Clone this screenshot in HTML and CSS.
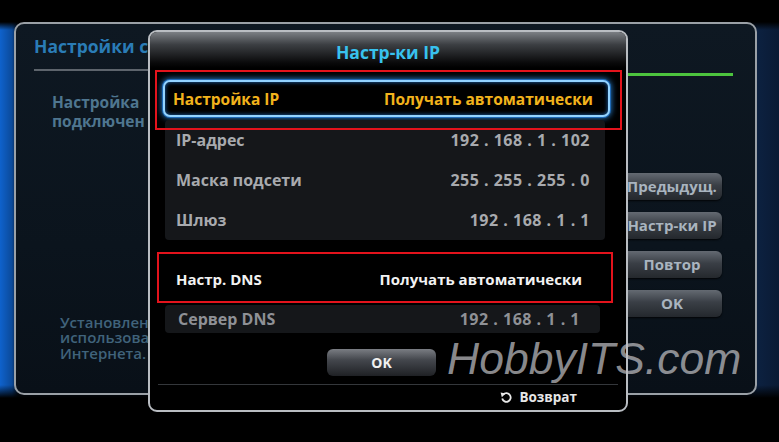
FILE: index.html
```html
<!DOCTYPE html>
<html lang="ru">
<head>
    <meta charset="UTF-8">
    <title>Настр-ки IP</title>
    <link rel="stylesheet" href="styles.css">
</head>
<body>
    <div class="screen">
        <!-- network settings panel behind the popup (only the visible part of its texts) -->
        <div class="back-panel">
            <div class="back-title">Настройки с</div>
            <div class="back-rule">
                <span class="rule-gray"></span>
                <span class="rule-green"></span>
            </div>
            <div class="back-body">
                <div class="back-info">
                    <p class="info-top">Настройка<br>подключен</p>
                    <p class="info-bottom">Установлен<br>использова<br>Интернета.</p>
                </div>
                <div class="side-buttons">
                    <div class="side-btn">Предыдущ.</div>
                    <div class="side-btn">Настр-ки IP</div>
                    <div class="side-btn">Повтор</div>
                    <div class="side-btn">OK</div>
                </div>
            </div>
        </div>

        <!-- IP settings popup -->
        <div class="dialog">
            <div class="dialog-head">Настр-ки IP</div>

            <div class="focus-row">
                <span>Настройка IP</span>
                <span>Получать автоматически</span>
            </div>

            <div class="list-panel">
                <div class="row"><span>IP-адрес</span><span class="ip">192 . 168 . 1 . 102</span></div>
                <div class="row"><span>Маска подсети</span><span class="ip">255 . 255 . 255 . 0</span></div>
                <div class="row"><span>Шлюз</span><span class="ip">192 . 168 . 1 . 1</span></div>
            </div>

            <div class="dns-row">
                <span>Настр. DNS</span>
                <span>Получать автоматически</span>
            </div>

            <div class="server-row">
                <span>Сервер DNS</span>
                <span class="ip">192 . 168 . 1 . 1</span>
            </div>

            <div class="ok-btn">OK</div>

            <div class="dialog-foot">
                <svg class="back-icon" width="12" height="12" viewBox="0 0 12 12">
                    <path d="M3.2 3.6 A4.3 4.3 0 1 1 2.2 7.6" fill="none" stroke="#e8e8e8" stroke-width="1.8"/>
                    <polygon points="0.6,1.4 5.6,2.6 1.8,6.2" fill="#e8e8e8"/>
                </svg>
                <span>Возврат</span>
            </div>

            <!-- red annotation frames -->
            <div class="mark mark-ip"></div>
            <div class="mark mark-dns"></div>
        </div>

        <div class="watermark">HobbyITS.com</div>
    </div>
</body>
</html>
```

FILE: styles.css
```css
body {
    margin: 0;
    background-color: #000;
    font-family: "Open Sans", "DejaVu Sans", sans-serif;
}

.screen {
    position: relative;
    width: 779px;
    height: 442px;
    overflow: hidden;
    padding-top: 22px;
    box-sizing: border-box;
    background:
        linear-gradient(180deg, #000 0, #000 22px, rgba(0, 0, 0, 0) 30px, rgba(0, 0, 0, 0) 385px, #000 398px),
        linear-gradient(90deg, #0f62cc 0, #0b4a9a 12px, #06162a 18px, #06142a 740px, #0c2140 758px, #0a1a34 779px);
}

/* ---------- back panel ---------- */

.back-panel {
    margin-left: 14px;
    width: 743px;
    height: 373px;
    box-sizing: border-box;
    border: 2px solid #9aa0a6;
    border-radius: 10px;
    background: linear-gradient(180deg, #0e1822 0%, #0b141d 60%, #091018 100%);
    padding: 12px 22px 32px 18px;
    display: flex;
    flex-direction: column;
}

.back-title {
    height: 20px;
    line-height: 20px;
    white-space: nowrap;
    font-size: 17.5px;
    font-weight: 700;
    color: #2a7cb6;
}

.back-rule {
    display: flex;
    justify-content: space-between;
    margin-top: 13px;
    height: 7px;
}

.rule-gray {
    width: 200px;
    height: 2px;
    background-color: #5d646c;
}

.rule-green {
    width: 105px;
    height: 3px;
    margin-top: 4px;
    background-color: #4cc43e;
}

.back-body {
    flex: 1;
    display: flex;
    justify-content: space-between;
}

.back-info {
    display: flex;
    flex-direction: column;
    justify-content: space-between;
    padding-left: 18px;
}

.info-top {
    white-space: nowrap;
    margin: 17px 0 0;
    font-size: 15.5px;
    font-weight: 700;
    line-height: 19px;
    color: #4f7690;
}

.info-bottom {
    white-space: nowrap;
    margin: 0 0 0 8px;
    font-size: 15px;
    font-weight: 600;
    line-height: 15.5px;
    color: #40637b;
}

.side-buttons {
    display: flex;
    flex-direction: column;
    gap: 12px;
    padding-top: 97px;
    margin-right: 11px;
}

.side-btn {
    width: 100px;
    height: 27px;
    line-height: 27px;
    border-radius: 6px;
    text-align: center;
    white-space: nowrap;
    font-size: 15px;
    font-weight: 700;
    color: #a9b4bf;
    background: linear-gradient(180deg, #646a72 0%, #3a3f46 45%, #24282d 100%);
    box-shadow: 0 1px 2px rgba(0, 0, 0, 0.8);
}

/* ---------- IP popup ---------- */

.dialog {
    position: absolute;
    left: 148px;
    top: 30px;
    width: 480px;
    height: 382px;
    box-sizing: border-box;
    border: 2px solid #b9bdc2;
    border-radius: 9px;
    background-color: #000;
    overflow: hidden;
}

.dialog-head {
    height: 36px;
    line-height: 40px;
    text-align: center;
    font-size: 17.5px;
    font-weight: 700;
    color: #38c2ee;
    background: linear-gradient(180deg, #7b7f84 0%, #3c3f43 35%, #0a0a0b 85%, #000 100%);
}

.focus-row {
    display: flex;
    justify-content: space-between;
    align-items: center;
    margin: 12px 16px 0 13px;
    height: 37px;
    box-sizing: border-box;
    padding: 0 15px 0 8px;
    border: 2px solid #93d3ff;
    border-radius: 7px;
    box-shadow: 0 0 0 1px #1f6ab8, 0 0 6px 1px #2b86d8, inset 0 0 4px #1f6ab8;
    background-color: #000;
    font-size: 15.5px;
    font-weight: 700;
    color: #f2b31c;
}

.list-panel {
    margin: 3px 21px 0 15px;
    border-radius: 4px;
    background-color: #15171a;
}

.row,
.dns-row,
.server-row {
    display: flex;
    justify-content: space-between;
    align-items: center;
    font-size: 16px;
    font-weight: 700;
}

.ip {
    letter-spacing: 0.5px;
}

.row {
    height: 40px;
    padding: 0 15px 0 11px;
    color: #a8aaae;
}

.dns-row {
    height: 36px;
    margin: 21px 21px 0 15px;
    padding: 0 23px 0 11px;
    font-size: 15px;
    color: #f2f2f2;
}

.server-row {
    height: 28px;
    margin: 8px 26px 0 15px;
    padding: 0 20px 0 13px;
    border-radius: 4px;
    background-color: #15171a;
    color: #8f9196;
}

.ok-btn {
    width: 109px;
    height: 27px;
    line-height: 27px;
    margin: 16px 0 0 177px;
    border-radius: 6px;
    text-align: center;
    font-size: 14px;
    font-weight: 700;
    color: #f0f0f0;
    background: linear-gradient(180deg, #7a7d83 0%, #44474d 40%, #1f2125 100%);
}

.dialog-foot {
    display: flex;
    justify-content: flex-end;
    align-items: center;
    gap: 7px;
    height: 24px;
    margin: 8px 8px 0;
    padding-right: 41px;
    border-top: 1px solid #34373b;
    font-size: 13.5px;
    font-weight: 700;
    color: #e6e6e6;
}

.back-icon {
    display: block;
}

.mark {
    position: absolute;
    border: 2px solid #e3131c;
    box-sizing: border-box;
}

.mark-ip {
    left: 5px;
    top: 38px;
    width: 467px;
    height: 60px;
}

.mark-dns {
    left: 7px;
    top: 220px;
    width: 456px;
    height: 51px;
}

.watermark {
    position: absolute;
    left: 447px;
    top: 337px;
    font-family: "Liberation Sans", Arial, sans-serif;
    font-style: italic;
    font-size: 44.5px;
    line-height: 44px;
    color: rgba(190, 190, 194, 0.72);
}
```
